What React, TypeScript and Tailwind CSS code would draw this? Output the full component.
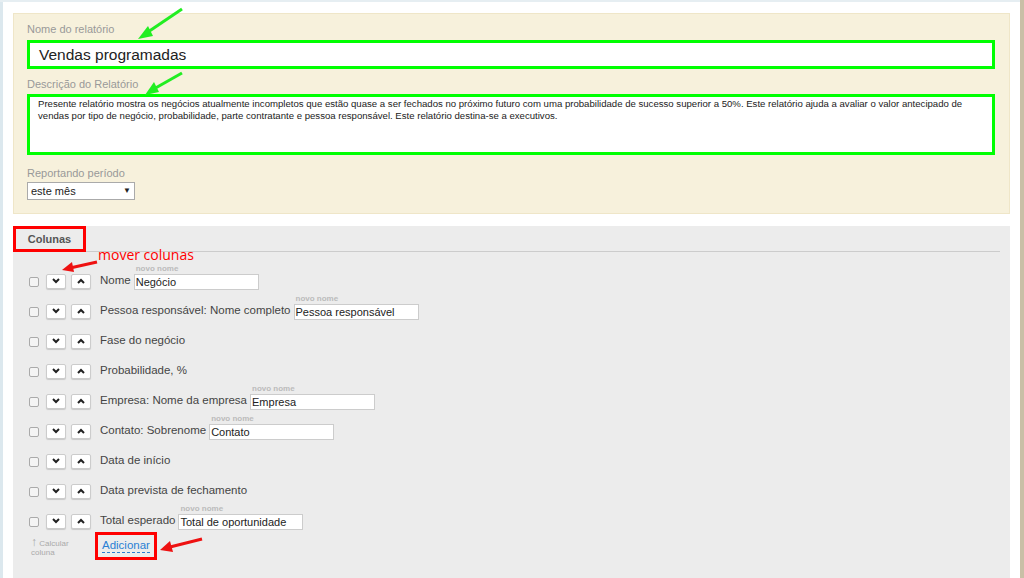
import React from "react";

const rows: { label: string; value?: string; w?: number }[] = [
  { label: "Nome", value: "Negócio", w: 125 },
  { label: "Pessoa responsável: Nome completo", value: "Pessoa responsável", w: 125 },
  { label: "Fase do negócio" },
  { label: "Probabilidade, %" },
  { label: "Empresa: Nome da empresa", value: "Empresa", w: 125 },
  { label: "Contato: Sobrenome", value: "Contato", w: 125 },
  { label: "Data de início" },
  { label: "Data prevista de fechamento" },
  { label: "Total esperado", value: "Total de oportunidade", w: 125 },
];

const Chev = ({ up }: { up?: boolean }) => (
  <div className="w-[20px] h-[15px] bg-white border border-[#ccc] rounded-[2px] shadow-[0_1px_1px_rgba(0,0,0,0.15)] flex items-center justify-center">
    <svg width="8" height="6" viewBox="0 0 8 6">
      <path d={up ? "M1 5 L4 2 L7 5" : "M1 1 L4 4 L7 1"} stroke="#222" strokeWidth="2" fill="none" />
    </svg>
  </div>
);

export default function App() {
  return (
    <div className="relative w-[1024px] h-[578px] overflow-hidden bg-white text-[#333]" style={{ fontFamily: "Arial, 'Liberation Sans', sans-serif" }}>
      <div className="absolute left-0 top-0 w-[3px] h-full bg-[#dce8ee]" />
      <div className="absolute left-0 top-0 w-full h-[2px] bg-[#e6eef2]" />
      <div className="absolute right-0 top-0 w-[4px] h-full bg-[#c9bfa6]" />
      <div className="pl-[13px] pr-[14px] pt-[13px] flex flex-col gap-[12px]">
        <div className="bg-[#f7f1dc] border border-[#efe6c8] h-[201px] pl-[13px] pr-[14px] pt-[6px]">
          <div className="text-[11px] text-[#999] h-[20px] leading-[18px]">Nome do relatório</div>
          <div className="border-[3px] border-[#00ff00] bg-white h-[29px] pl-[9px] flex items-center text-[15.5px] text-[#222]">Vendas programadas</div>
          <div className="text-[11px] text-[#999] mt-[7px] h-[16px] leading-[16px]">Descrição do Relatório</div>
          <div className="border-[3px] border-[#00ff00] bg-white h-[61px] mt-[2px] pl-[8px] pr-[10px] pt-[1px] text-[9.6px] leading-[12px] text-[#222]">
            Presente relatório mostra os negócios atualmente incompletos que estão quase a ser fechados no próximo futuro com uma probabilidade de sucesso superior a 50%. Este relatório ajuda a avaliar o valor antecipado de vendas por tipo de negócio, probabilidade, parte contratante e pessoa responsável. Este relatório destina-se a executivos.
          </div>
          <div className="text-[11px] text-[#999] mt-[10px] h-[16px] leading-[16px]">Reportando período</div>
          <div className="mt-[1px] w-[108px] h-[18px] bg-white border border-[#aaa] flex items-center justify-between px-[3px] text-[11px] text-[#222]">
            <span>este mês</span>
            <span className="text-[8px]">▼</span>
          </div>
        </div>
        <div className="bg-[#ececec] h-[360px] relative">
          <div className="flex items-end">
            <div className="w-[73px] h-[26px] border-[3px] border-[#ff0000] flex items-center justify-center text-[11px] font-bold text-[#555]">Colunas</div>
            <div className="flex-1 border-b border-[#ccc] mr-[10px]" />
          </div>
          <div className="pl-[16px] pt-[14px]">
            {rows.map((r, i) => (
              <div key={i} className="h-[30px] flex items-center gap-[5px] relative">
                <div className="w-[10px] h-[10px] border border-[#aaa] rounded-[2px] bg-[#f4f4f4] mr-[2px] mt-[2px]" />
                <Chev />
                <Chev up />
                <span className="ml-[4px] text-[11.5px] text-[#444]">{r.label}</span>
                {r.value && (
                  <div className="relative ml-[-2px] mt-[2px]">
                    <div className="absolute -top-[11px] left-[2px] text-[8px] font-bold text-[#bbb] whitespace-nowrap">novo nome</div>
                    <div className="w-[125px] h-[16px] bg-white border border-[#ccc] text-[11px] text-[#222] pl-[1px] leading-[14px]">{r.value}</div>
                  </div>
                )}
              </div>
            ))}
            <div className="flex items-start mt-[2px]">
              <div className="text-[8px] leading-[9px] text-[#aaa] w-[62px] pl-[2px]">
                <span className="text-[12px]">↑</span> Calcular<br />coluna
              </div>
              <div className="border-[3px] border-[#ff0000] px-[4px] h-[28px] mt-[-6px] ml-[4px] flex items-center">
                <span className="text-[11.5px] text-[#2a7fd4] border-b border-dashed border-[#2a7fd4] leading-[13px]">Adicionar</span>
              </div>
            </div>
          </div>
        </div>
      </div>
      <div className="absolute left-[98px] top-[246px] text-[14px] leading-[18px] text-[#ff0000]" style={{ fontFamily: "'Open Sans', sans-serif" }}>mover colunas</div>
      <svg className="absolute left-0 top-0" width="1024" height="578">
        <g stroke="#22ee22" strokeWidth="3" fill="#22ee22">
          <line x1="182" y1="9" x2="145" y2="34" />
          <polygon points="138,39 148,26 153,36" stroke="none" />
          <line x1="182" y1="73" x2="152" y2="90" />
          <polygon points="145,95 154,82 159,92" stroke="none" />
        </g>
        <g stroke="#ee1111" strokeWidth="3" fill="#ee1111">
          <line x1="97" y1="262" x2="70" y2="268" />
          <polygon points="62,270 72,262 74,272" stroke="none" />
          <line x1="202" y1="539" x2="170" y2="547" />
          <polygon points="160,550 170,541 173,552" stroke="none" />
        </g>
      </svg>
    </div>
  );
}
